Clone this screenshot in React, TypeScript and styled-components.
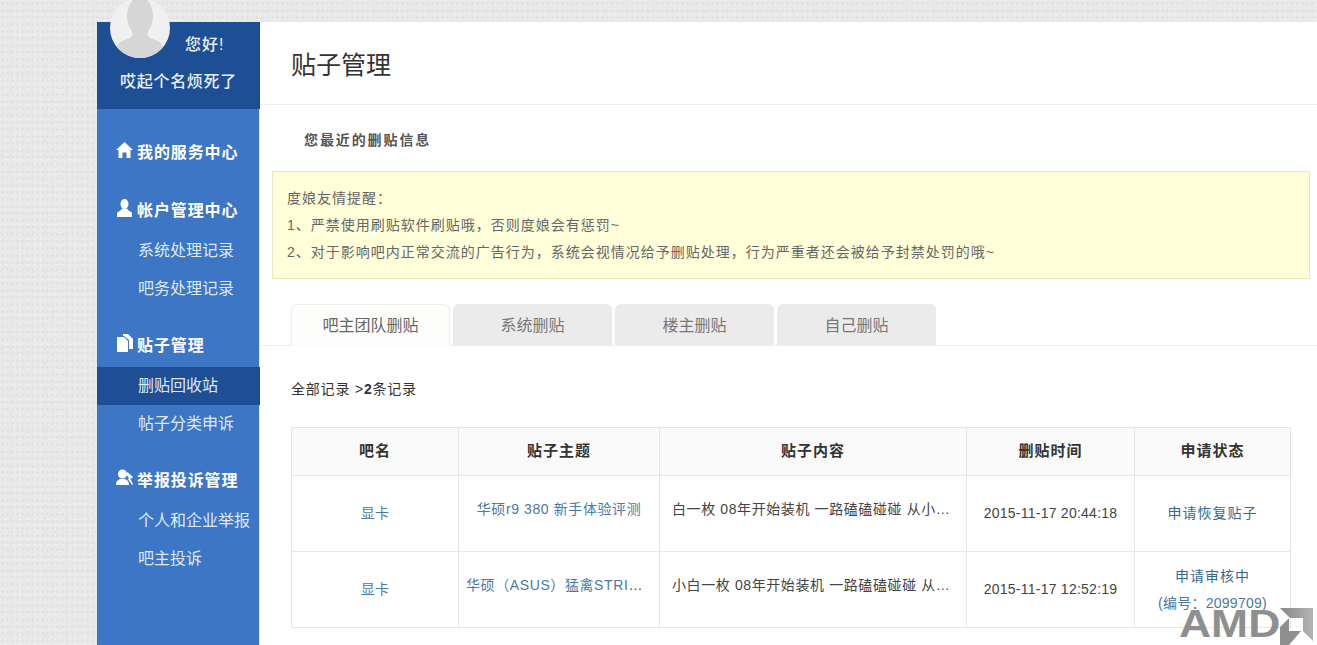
import React from "react";
import styled, { createGlobalStyle } from "styled-components";

const GlobalStyle = createGlobalStyle`
  html, body {
    margin: 0;
    height: 100%;
    overflow: hidden;
  }
  body {
    font-family: "Liberation Sans", "Noto Sans CJK SC", sans-serif;
    font-size: 14px;
    color: #444;
    background-color: #e9e9e9;
    background-image:
      radial-gradient(#e2e2e2 1px, transparent 1.5px),
      radial-gradient(#f0f0f0 1px, transparent 1.5px),
      radial-gradient(#e4e4e4 1px, transparent 1.5px);
    background-size: 5px 7px, 7px 5px, 11px 13px;
    background-position: 0 0, 3px 2px, 6px 5px;
  }
`;

const Page = styled.div`
  position: relative;
  display: flex;
  height: 645px;
  padding: 22px 0 0 97px;
  box-sizing: border-box;
`;

const Sidebar = styled.aside`
  width: 162px;
  flex: none;
  margin-right: 1px;
  background: #3d76c5;
`;

const Profile = styled.div`
  position: relative;
  width: 163px;
  height: 87px;
  background: #1e4f95;
  color: #e8f1fb;
  box-sizing: border-box;
`;

const Avatar = styled.div`
  position: absolute;
  left: 13px;
  top: -24px;
  width: 60px;
  height: 60px;
  border-radius: 50%;
  overflow: hidden;
  background: #f0f0f0;
`;

const Hello = styled.div`
  padding: 12px 0 0 88px;
  font-size: 16px;
  line-height: 22px;
  letter-spacing: 1px;
  font-weight: 500;
`;

const Nick = styled.div`
  margin-top: 15px;
  text-align: center;
  font-size: 16px;
  line-height: 22px;
  letter-spacing: 0.7px;
  font-weight: 500;
`;

const Nav = styled.nav`
  padding-top: 24px;
`;

const Group = styled.div`
  margin-bottom: 20px;
`;

const GroupHead = styled.div`
  display: flex;
  align-items: center;
  height: 38px;
  box-sizing: border-box;
  padding: 0 0 2px 19px;
  color: #fff;
  font-size: 16px;
  font-weight: 700;
  letter-spacing: 0.9px;
`;

const HeadIcon = styled.span`
  display: flex;
  justify-content: center;
  width: 17px;
  margin: 0 4px 3px 0;
`;

const SubList = styled.div`
  margin: 3px 0 -1px;
`;

const SubItem = styled.div<{ $active?: boolean }>`
  width: ${(p) => (p.$active ? "163px" : "162px")};
  height: 37.5px;
  line-height: 37.5px;
  padding-left: 41px;
  box-sizing: border-box;
  font-size: 16px;
  white-space: nowrap;
  color: #dfeafa;
  background: ${(p) => (p.$active ? "#1e4f95" : "transparent")};
`;

const Main = styled.main`
  flex: 1;
  min-width: 0;
  background: #fff;
`;

const TitleBar = styled.div`
  height: 82px;
  border-bottom: 1px solid #eee;
  padding-left: 31px;
  display: flex;
  align-items: center;
  font-size: 25px;
  color: #333;
`;

const SectionTitle = styled.div`
  padding: 25px 0 0 44px;
  height: 41px;
  line-height: 20px;
  font-weight: 700;
  color: #555;
  letter-spacing: 1.9px;
`;

const Notice = styled.div`
  margin-left: 12px;
  width: 1038px;
  height: 108px;
  box-sizing: border-box;
  padding: 13px 14px;
  line-height: 27px;
  letter-spacing: 1px;
  background: #ffffd9;
  border: 1px solid #e8e8bd;
  color: #666;
`;

const Tabs = styled.div`
  display: flex;
  gap: 3px;
  height: 41px;
  margin-top: 25px;
  padding-left: 31px;
  border-bottom: 1px solid #eee;
`;

const Tab = styled.div<{ $active?: boolean }>`
  width: 159px;
  height: ${(p) => (p.$active ? "42px" : "41px")};
  box-sizing: border-box;
  border-radius: 6px 6px 0 0;
  border: 1px solid ${(p) => (p.$active ? "#eee" : "#ebebeb")};
  border-bottom: 0;
  background: ${(p) => (p.$active ? "#fdfdfc" : "#ebebeb")};
  color: ${(p) => (p.$active ? "#666" : "#777")};
  font-size: 16px;
  line-height: 41px;
  text-align: center;
`;

const Crumb = styled.div`
  margin: 32px 0 0 31px;
  line-height: 22px;
  letter-spacing: 0.8px;
  color: #333;
`;

const Records = styled.table`
  margin: 27px 0 0 31px;
  width: 999px;
  border-collapse: collapse;
  table-layout: fixed;
`;

const Th = styled.th`
  height: 42px;
  padding: 0 0 5px;
  border: 1px solid #e6e6e6;
  background: #fafafa;
  color: #333;
  font-size: 15px;
  letter-spacing: 1px;
`;

const Td = styled.td`
  height: 75px;
  padding: 0 7px;
  border: 1px solid #e6e6e6;
  text-align: center;
  line-height: 27px;
  letter-spacing: 0.25px;
  color: #444;
`;

const Clip = styled.div<{ $left?: boolean }>`
  padding: ${(p) => (p.$left ? "0 6px 8px 5px" : "0 0 8px")};
  white-space: nowrap;
  overflow: hidden;
  text-overflow: ellipsis;
  letter-spacing: 0.6px;
  text-align: ${(p) => (p.$left ? "left" : "center")};
`;

const Link = styled.a<{ $status?: boolean }>`
  color: ${(p) => (p.$status ? "#356a90" : "#4a7aa3")};
  letter-spacing: ${(p) => (p.$status ? "1px" : "inherit")};
  text-decoration: none;
`;

const Watermark = styled.div`
  position: absolute;
  left: 1179px;
  top: 604px;
  display: flex;
  align-items: flex-start;
  color: #8f8f8f;
  font-size: 39px;
  font-weight: 700;
  line-height: 40px;
`;

const WatermarkText = styled.span`
  display: inline-block;
  transform: scaleX(1.14);
  transform-origin: left center;
  margin-right: 12px;
`;

const WatermarkLogo = styled.svg`
  display: block;
  margin-top: 4px;
`;

const HomeGlyph = () => (
  <svg width="17" height="16" viewBox="0 0 17 16" fill="#fff">
    <path d="M8.500 0L17 8h-2.500v8h-4v-5.500h-4V16h-4V8H0z" />
  </svg>
);

const UserGlyph = () => (
  <svg width="15" height="18" viewBox="0 0 15 18" fill="#fff">
    <ellipse cx="7.500" cy="5" rx="4" ry="5" />
    <path d="M0 18v-3.500C0 12.500 4 12 5 9.500h5c1 2.500 5 3 5 5V18z" />
  </svg>
);

const FilesGlyph = () => (
  <svg width="16" height="18" viewBox="0 0 16 18" fill="#fff">
    <path d="M0 3h7l4 4v11H0z" />
    <path d="M6 0h5l5 5v10h-4V6L7 2H6z" />
  </svg>
);

const UsersGlyph = () => (
  <svg width="17" height="17" viewBox="0 0 17 17" fill="#fff">
    <circle cx="6.500" cy="5" r="4.500" />
    <path d="M0 16c0-4 2-5 4-6h5c2 1 4 2 4 6z" />
    <path d="M11.500 3l5.500 5-1.500 1.500L14 9l3 6-1 1-4-6 1-1-2.500-3z" />
  </svg>
);

const menu = [
  { title: "我的服务中心", icon: <HomeGlyph />, items: [] as string[] },
  { title: "帐户管理中心", icon: <UserGlyph />, items: ["系统处理记录", "吧务处理记录"] },
  { title: "贴子管理", icon: <FilesGlyph />, items: ["删贴回收站", "帖子分类申诉"] },
  { title: "举报投诉管理", icon: <UsersGlyph />, items: ["个人和企业举报", "吧主投诉"] },
];

const tabs = ["吧主团队删贴", "系统删贴", "楼主删贴", "自己删贴"];

const App = () => (
  <>
    <GlobalStyle />
    <Page>
      <Sidebar>
        <Profile>
          <Avatar>
            <svg width="60" height="60" viewBox="0 0 60 60" fill="#d6d6d6">
              <ellipse cx="30" cy="18" rx="13" ry="19" />
              <path d="M22 30h16v8c3 4 12 4 14 9v13H8V47c2-5 11-5 14-9z" />
            </svg>
          </Avatar>
          <Hello>您好!</Hello>
          <Nick>哎起个名烦死了</Nick>
        </Profile>
        <Nav>
          {menu.map((group) => (
            <Group key={group.title}>
              <GroupHead>
                <HeadIcon>{group.icon}</HeadIcon>
                {group.title}
              </GroupHead>
              {group.items.length > 0 && (
                <SubList>
                  {group.items.map((item) => (
                    <SubItem key={item} $active={item === "删贴回收站"}>
                      {item}
                    </SubItem>
                  ))}
                </SubList>
              )}
            </Group>
          ))}
        </Nav>
      </Sidebar>
      <Main>
        <TitleBar>贴子管理</TitleBar>
        <SectionTitle>您最近的删贴信息</SectionTitle>
        <Notice>
          度娘友情提醒：
          <br />
          1、严禁使用刷贴软件刷贴哦，否则度娘会有惩罚~
          <br />
          2、对于影响吧内正常交流的广告行为，系统会视情况给予删贴处理，行为严重者还会被给予封禁处罚的哦~
        </Notice>
        <Tabs>
          {tabs.map((tab, i) => (
            <Tab key={tab} $active={i === 0}>
              {tab}
            </Tab>
          ))}
        </Tabs>
        <Crumb>
          全部记录 &gt;<b>2</b>条记录
        </Crumb>
        <Records>
          <colgroup>
            <col style={{ width: 167 }} />
            <col style={{ width: 201 }} />
            <col style={{ width: 307 }} />
            <col style={{ width: 168 }} />
            <col style={{ width: 156 }} />
          </colgroup>
          <thead>
            <tr>
              <Th>吧名</Th>
              <Th>贴子主题</Th>
              <Th>贴子内容</Th>
              <Th>删贴时间</Th>
              <Th>申请状态</Th>
            </tr>
          </thead>
          <tbody>
            <tr>
              <Td><Link>显卡</Link></Td>
              <Td><Clip><Link>华硕r9 380 新手体验评测</Link></Clip></Td>
              <Td><Clip $left>白一枚 08年开始装机 一路磕磕碰碰 从小白到现在的老白一枚</Clip></Td>
              <Td>2015-11-17 20:44:18</Td>
              <Td><Link $status>申请恢复贴子</Link></Td>
            </tr>
            <tr>
              <Td><Link>显卡</Link></Td>
              <Td><Clip><Link>华硕（ASUS）猛禽STRIX-R9 380 显卡</Link></Clip></Td>
              <Td><Clip $left>小白一枚 08年开始装机 一路磕磕碰碰 从小白到现在的老白一枚</Clip></Td>
              <Td>2015-11-17 12:52:19</Td>
              <Td>
                <Link $status>申请审核中</Link>
                <br />
                <Link>(编号：2099709)</Link>
              </Td>
            </tr>
          </tbody>
        </Records>
      </Main>
      <Watermark>
        <WatermarkText>AMD</WatermarkText>
        <WatermarkLogo width="33" height="37" viewBox="0 0 33 37">
          <defs>
            <linearGradient id="amdFade" x1="0" x2="1" y1="0" y2="0">
              <stop offset="0" stopColor="#858585" />
              <stop offset="1" stopColor="#b5b5b5" />
            </linearGradient>
          </defs>
          <path fill="url(#amdFade)" d="M0 0h33v33L23 23V10H10z" />
          <path fill="#8f8f8f" d="M0 19l9-9v13h12l-12 14H0z" />
        </WatermarkLogo>
      </Watermark>
    </Page>
  </>
);

export default App;
